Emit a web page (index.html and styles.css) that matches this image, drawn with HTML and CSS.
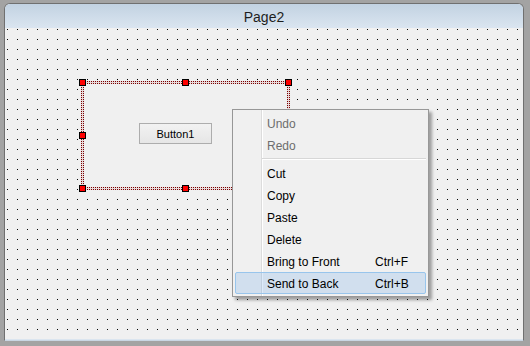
FILE: index.html
```
<!DOCTYPE html>
<html>

<head>
    <link rel="stylesheet" href="styles.css">
</head>

<body>
    <div class="window">
        <div class="title-bar">Page2</div>

        <div class="canvas">
            <div class="selection">
                <div class="panel">
                    <button class="designer-button">Button1</button>
                </div>
                <span class="handle handle-tl"></span>
                <span class="handle handle-tm"></span>
                <span class="handle handle-tr"></span>
                <span class="handle handle-ml"></span>
                <span class="handle handle-bl"></span>
                <span class="handle handle-bm"></span>
            </div>

            <div class="context-menu">
                <div class="menu-item disabled"><span class="label">Undo</span></div>
                <div class="menu-item disabled"><span class="label">Redo</span></div>
                <div class="menu-separator"></div>
                <div class="menu-item"><span class="label">Cut</span></div>
                <div class="menu-item"><span class="label">Copy</span></div>
                <div class="menu-item"><span class="label">Paste</span></div>
                <div class="menu-item"><span class="label">Delete</span></div>
                <div class="menu-item"><span class="label">Bring to Front</span><span class="shortcut">Ctrl+F</span></div>
                <div class="menu-item active"><span class="label">Send to Back</span><span class="shortcut">Ctrl+B</span></div>
            </div>
        </div>
    </div>
</body>

</html>
```

FILE: styles.css
```
body {
    margin: 0;
    padding: 3px 0 0 4px;
    background-color: #a3a3a3;
    font-family: "Liberation Sans", Arial, sans-serif;
}

.window {
    width: 520px;
    height: 338px;
    box-sizing: border-box;
    border: 1px solid #707070;
    border-bottom-color: #c9d6e3;
    border-radius: 6px 6px 0 0;
    background-color: #f0f0f0;
    overflow: hidden;
    display: flex;
    flex-direction: column;
}

.title-bar {
    height: 24px;
    line-height: 27px;
    text-align: center;
    font-size: 14px;
    color: #1e1e1e;
    background: linear-gradient(#c2d2e2, #dae5f0);
}

.canvas {
    position: relative;
    flex: 1;
    background-color: #f0f0f0;
    background-image: conic-gradient(from 270deg at 1px 1px, #000 90deg, transparent 0);
    background-size: 10px 10px;
    background-position: 2px 1px;
    border-bottom: 1px solid #dbe5ef;
}

/* selected panel on the design surface */
.selection {
    position: absolute;
    left: 76px;
    top: 53px;
    width: 209px;
    height: 109px;
    padding: 3px;
    box-sizing: border-box;
    background-color: #e8dada;
    background-image: conic-gradient(from 270deg at 1px 1px, #7a0000 90deg, transparent 0);
    background-size: 2px 2px;
}

.panel {
    height: 100%;
    background-color: #f0f0f0;
    padding: 39px 0 0 55px;
    box-sizing: border-box;
}

.designer-button {
    display: block;
    width: 73px;
    height: 21px;
    margin: 0;
    padding: 0;
    border: 1px solid #adadad;
    background: linear-gradient(#f2f2f2, #e6e6e6);
    font-family: "Liberation Sans", Arial, sans-serif;
    font-size: 11px;
    color: #000;
}

.handle {
    position: absolute;
    width: 7px;
    height: 7px;
    box-sizing: border-box;
    border: 1px solid #000;
    background-color: #ff0000;
}

.handle-tl { left: -2px; top: -2px; }
.handle-tm { left: 101px; top: -2px; }
.handle-tr { left: 204px; top: -2px; }
.handle-ml { left: -2px; top: 51px; }
.handle-bl { left: -2px; top: 104px; }
.handle-bm { left: 101px; top: 104px; }

/* context menu */
.context-menu {
    position: absolute;
    left: 227px;
    top: 81px;
    width: 197px;
    height: 188px;
    box-sizing: border-box;
    padding: 2px;
    border: 1px solid #979797;
    background-color: #f0f0f0;
    background-image: linear-gradient(to right, transparent 28px, #dcdcdc 28px, #dcdcdc 29px, #fff 29px, #fff 30px, transparent 30px);
    box-shadow: 3px 3px 3px rgba(0, 0, 0, 0.35);
    font-size: 12px;
}

.menu-item {
    display: flex;
    height: 22px;
    line-height: 24px;
    padding-left: 32px;
    box-sizing: border-box;
    color: #000;
}

.menu-item .label {
    width: 108px;
}

.menu-item.disabled {
    color: #6d6d6d;
}

.menu-item.active {
    line-height: 22px;
    padding-left: 31px;
    border: 1px solid #98c5ec;
    border-radius: 2px;
    background-color: rgba(86, 157, 229, 0.2);
}

.menu-separator {
    height: 6px;
    margin-left: 27px;
    padding-top: 2px;
    box-sizing: border-box;
}

.menu-separator::after {
    content: "";
    display: block;
    height: 1px;
    background-color: #d7d7d7;
    border-bottom: 1px solid #fff;
}
```
